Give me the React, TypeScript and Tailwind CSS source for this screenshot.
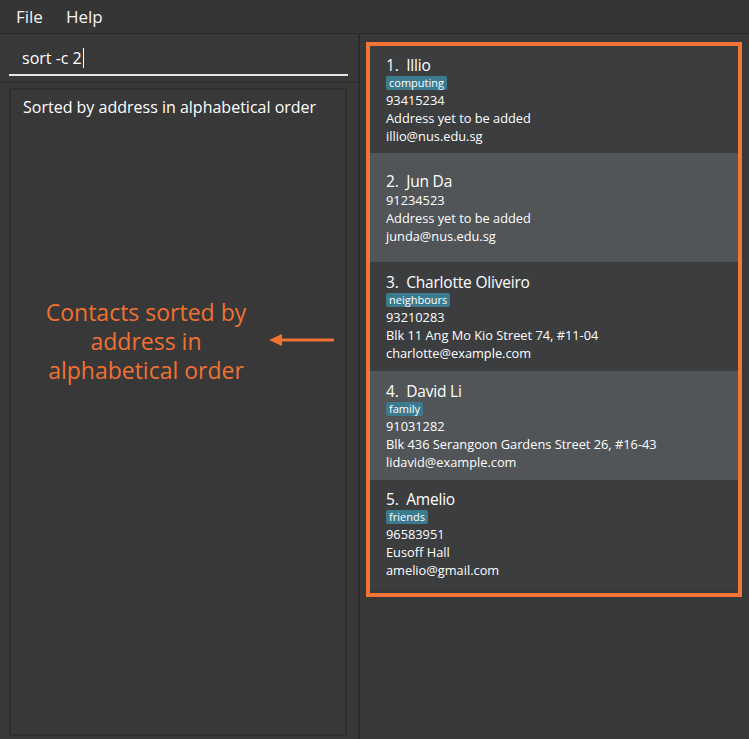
import React from "react";

type Person = { name: string; tag?: string; phone: string; addr: string; email: string; h: string; light: boolean };

const people: Person[] = [
  { name: "Illio", tag: "computing", phone: "93415234", addr: "Address yet to be added", email: "illio@nus.edu.sg", h: "h-[107px]", light: false },
  { name: "Jun Da", phone: "91234523", addr: "Address yet to be added", email: "junda@nus.edu.sg", h: "h-[109px]", light: true },
  { name: "Charlotte Oliveiro", tag: "neighbours", phone: "93210283", addr: "Blk 11 Ang Mo Kio Street 74, #11-04", email: "charlotte@example.com", h: "h-[109px]", light: false },
  { name: "David Li", tag: "family", phone: "91031282", addr: "Blk 436 Serangoon Gardens Street 26, #16-43", email: "lidavid@example.com", h: "h-[109px]", light: true },
  { name: "Amelio", tag: "friends", phone: "96583951", addr: "Eusoff Hall", email: "amelio@gmail.com", h: "h-[108px]", light: false },
];

function Card({ p, i }: { p: Person; i: number }) {
  return (
    <div className={`${p.h} flex flex-col justify-center pl-4 ${p.light ? "bg-[#515557]" : "bg-[#3c3d3f]"}`}>
      <div className="h-[20px] leading-[20px] text-[15.5px] text-white whitespace-pre tracking-[-0.2px]">{`${i + 1}.  ${p.name}`}</div>
      {p.tag && (
        <div className="flex mt-[1px] mb-[1px]">
          <span className="h-[14px] leading-[14px] px-[3px] rounded-[2px] bg-[#3c7a8f] text-[11px] text-white">{p.tag}</span>
        </div>
      )}
      <div className="text-[12.8px] leading-[18px] text-white">{p.phone}</div>
      <div className="text-[12.8px] leading-[18px] text-white">{p.addr}</div>
      <div className="text-[12.8px] leading-[18px] text-white">{p.email}</div>
    </div>
  );
}

export default function App() {
  return (
    <div className="w-[749px] h-[739px] bg-[#383838] flex flex-col overflow-hidden" style={{ fontFamily: '"Open Sans", "Noto Sans", sans-serif' }}>
      <div className="h-[34px] shrink-0 flex items-center gap-[23px] pl-[16px] bg-[#353535] border-b border-[#2b2b2b] text-[17px] text-[#f2f2f2]">
        <span>File</span>
        <span>Help</span>
      </div>
      <div className="flex flex-1 min-h-0">
        <div className="w-[360px] shrink-0 flex flex-col border-r-2 border-[#2c2c2c]">
          <div className="h-[49px] shrink-0 pl-[9px] pr-[10px] pt-[7px] border-b border-[#2c2c2c]">
            <div className="h-[35px] pl-[13px] border-b-2 border-[#e6e6e6] flex items-center text-[16px] text-white">
              sort -c 2<span className="inline-block w-[1px] h-[20px] bg-white ml-[1px]" />
            </div>
          </div>
          <div className="flex-1 pl-[9px] pr-[11px] pt-[5px] pb-[3px] relative">
            <div className="h-full border-2 border-[#2e2e2e] px-[12px] pt-[5px] text-[16px] text-white">
              Sorted by address in alphabetical order
            </div>
            <div className="absolute left-[19px] top-[215px] w-[254px] text-center text-[23px] leading-[29px] text-[#f07132]">
              Contacts sorted by
              <br />
              address in
              <br />
              alphabetical order
            </div>
            <svg className="absolute left-[268px] top-[250px]" width="68" height="14" viewBox="0 0 68 14">
              <line x1="10" y1="7" x2="66" y2="7" stroke="#f07132" strokeWidth="3" />
              <polygon points="1,7 14,1 14,13" fill="#f07132" />
            </svg>
          </div>
        </div>
        <div className="flex-1 pl-[6px] pr-[7px] pt-[8px]">
          <div className="h-[555px] border-4 border-[#f47435] bg-[#3a3a3a]">
            {people.map((p, i) => (
              <Card key={i} p={p} i={i} />
            ))}
          </div>
        </div>
      </div>
    </div>
  );
}
